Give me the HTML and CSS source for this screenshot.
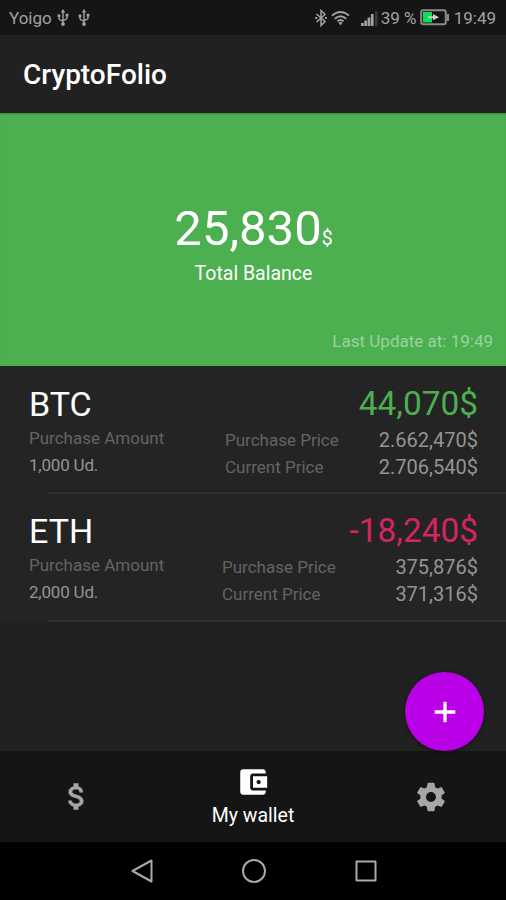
FILE: index.html
```html
<!DOCTYPE html>
<html lang="en">
<head>
<meta charset="utf-8">
<title>CryptoFolio</title>
<link rel="stylesheet" href="styles.css">
</head>
<body>
<div class="status">
  <span class="carrier">Yoigo</span>
  <svg class="usb" viewBox="0 0 12 18"><g id="usb"><path d="M6 2V14M2 7v2.500q0 1.500 4 2.500M10 6v3q0 1.500-4 2.500" fill="none" stroke="currentColor" stroke-width="1.400"/><path d="M6 0l2.200 3.500H3.800zM.6 5.500h2.800v2.600H.6zM8.600 4.800h2.800v2.600H8.600z" fill="currentColor"/><circle cx="6" cy="15" r="1.900" fill="currentColor"/></g></svg>
  <svg class="usb" viewBox="0 0 12 18"><use href="#usb"/></svg>
  <span class="spacer"></span>
  <svg class="bt" viewBox="0 0 12 18"><path d="M1.500 5l8.500 7.500L6 16.500v-15l4 4L1.500 13" fill="none" stroke="currentColor" stroke-width="1.500"/><path d="M.2 8h2v2h-2zM9.800 8h2v2h-2z" fill="currentColor"/></svg>
  <svg class="wifi" viewBox="0 0 20 16"><path d="M1 5.500Q10-2 19 5.500M4 8.700Q10 3.500 16 8.700M6.800 11.500Q10 8.800 13.200 11.500" fill="none" stroke="currentColor" stroke-width="2"/><path d="M7.800 13q2.200-1.500 4.400 0L10 15.700z" fill="currentColor"/></svg>
  <svg class="signal" viewBox="0 0 18 16"><path d="M0 13h2.700v3H0zM3.300 10.500h2.700V16H3.300zM6.600 7.500h2.700V16H6.600zM9.900 4h2.700V16H9.900z" fill="currentColor"/><path d="M14 1h2.500v15H14z" fill="#3a3a3a"/></svg>
  <span class="percent">39 %</span>
  <svg class="battery" viewBox="0 0 30 17"><rect x="1.200" y="1.200" width="24.600" height="14" rx="2" fill="none" stroke="#8b8b8b" stroke-width="2"/><path d="M27 5h2v7h-2z" fill="#8b8b8b"/><path d="M3 3h9v10.500H3z" fill="#0ddb59"/><path d="M8 7.300h5V5l6 3.300-6 3v-2H8z" fill="#c3cfc7"/></svg>
  <span class="time">19:49</span>
</div>
<header class="appbar">CryptoFolio</header>
<section class="balance">
  <div class="total">25,830<span class="currency">$</span></div>
  <div class="caption">Total Balance</div>
  <div class="updated">Last Update at: 19:49</div>
</section>
<main class="holdings">
  <article class="coin">
    <div class="line"><h2>BTC</h2><span class="profit gain">44,070$</span></div>
    <div class="details">
      <div class="amount"><span class="label">Purchase Amount</span><span class="units">1,000 Ud.</span></div>
      <dl class="prices"><dt>Purchase Price</dt><dd>2.662,470$</dd><dt>Current Price</dt><dd>2.706,540$</dd></dl>
    </div>
  </article>
  <article class="coin">
    <div class="line"><h2>ETH</h2><span class="profit loss">-18,240$</span></div>
    <div class="details">
      <div class="amount"><span class="label">Purchase Amount</span><span class="units">2,000 Ud.</span></div>
      <dl class="prices wide"><dt>Purchase Price</dt><dd>375,876$</dd><dt>Current Price</dt><dd>371,316$</dd></dl>
    </div>
  </article>
  <button class="fab" aria-label="Add"><svg viewBox="0 0 24 24"><path d="M12 1.700v20.600M1.700 12h20.600" stroke="#fff" stroke-width="3.300"/></svg></button>
</main>
<nav class="tabs">
  <div class="tab"><svg class="dollar" viewBox="6 3 11 18"><path d="M11.800 10.900c-2.270-.59-3-1.200-3-2.150 0-1.090 1.010-1.850 2.700-1.850 1.780 0 2.440.85 2.500 2.100h2.210c-.07-1.720-1.120-3.300-3.210-3.810V3h-3v2.160c-1.940.42-3.500 1.680-3.500 3.610 0 2.310 1.910 3.460 4.700 4.130 2.500.6 3 1.480 3 2.410 0 .69-.49 1.790-2.700 1.790-2.060 0-2.870-.92-2.980-2.100h-2.200c.12 2.190 1.760 3.420 3.680 3.830V21h3v-2.150c1.950-.37 3.500-1.500 3.500-3.550 0-2.840-2.430-3.810-4.700-4.400z" fill="currentColor" stroke="currentColor" stroke-width=".4"/></svg></div>
  <div class="tab active"><svg class="wallet" viewBox="0 0 24 24"><path d="M21 18v1c0 1.100-.9 2-2 2H5c-1.110 0-2-.9-2-2V5c0-1.100.89-2 2-2h14c1.100 0 2 .9 2 2v1h-9c-1.110 0-2 .9-2 2v8c0 1.100.89 2 2 2h9zm-9-2h10V8H12v8zm4-2.500c-.83 0-1.500-.67-1.500-1.500s.67-1.500 1.500-1.500 1.500.67 1.500 1.500-.67 1.500-1.500 1.500z" fill="currentColor"/></svg><span>My wallet</span></div>
  <div class="tab"><svg class="gear" viewBox="0 0 24 24"><path d="M19.430 12.980c.04-.32.07-.64.07-.98s-.03-.66-.07-.98l2.110-1.650c.19-.15.24-.42.12-.64l-2-3.460c-.12-.22-.39-.3-.61-.22l-2.490 1c-.52-.4-1.080-.73-1.690-.98l-.38-2.650C14.460 2.180 14.250 2 14 2h-4c-.25 0-.46.18-.49.42l-.38 2.650c-.61.25-1.170.59-1.690.98l-2.490-1c-.23-.09-.49 0-.61.22l-2 3.460c-.13.22-.07.49.12.64l2.110 1.650c-.04.32-.07.65-.07.98s.03.66.07.98l-2.110 1.650c-.19.15-.24.42-.12.64l2 3.460c.12.22.39.3.61.22l2.490-1c.52.4 1.080.73 1.690.98l.38 2.650c.03.24.24.42.49.42h4c.25 0 .46-.18.49-.42l.38-2.650c.61-.25 1.170-.59 1.690-.98l2.490 1c.23.09.49 0 .61-.22l2-3.460c.12-.22.07-.49-.12-.64l-2.110-1.650zM12 15.500c-1.930 0-3.500-1.570-3.500-3.500s1.570-3.500 3.500-3.500 3.500 1.570 3.500 3.500-1.570 3.500-3.500 3.500z" fill="currentColor"/></svg></div>
</nav>
<div class="system">
  <svg viewBox="0 0 24 26"><path d="M21.500 2.500v21L2.500 13z"/></svg>
  <svg viewBox="0 0 24 26"><circle cx="12" cy="13" r="11"/></svg>
  <svg viewBox="0 0 24 26"><rect x="2.500" y="3.500" width="19" height="19"/></svg>
</div>
</body>
</html>
```

FILE: styles.css
```css
* { box-sizing: border-box; }
body {
  margin: 0;
  width: 506px;
  height: 900px;
  display: flex;
  flex-direction: column;
  overflow: hidden;
  background: #212121;
  color: #fff;
  font-family: Roboto, sans-serif;
}
svg { display: block; flex: none; }
h2, dl, dd { margin: 0; }

.status {
  height: 35px;
  padding: 0 10px 0 9px;
  display: flex;
  align-items: center;
  background: #151515;
  color: #a2a2a2;
  font-size: 17px;
  line-height: 36px;
}
.usb { width: 12px; height: 18px; margin-left: 5px; }
.usb + .usb { margin-left: 9px; }
.spacer { flex: 1; }
.bt { width: 12px; height: 18px; }
.wifi { width: 19px; height: 16px; margin-left: 4px; }
.signal { width: 18px; height: 16px; margin-left: 11px; }
.percent { margin-left: 2px; width: 35px; white-space: nowrap; }
.battery { width: 30px; height: 17px; margin-left: 4px; }
.time { margin-left: 4px; }

.appbar {
  height: 78px;
  padding-left: 23px;
  font-size: 28px;
  font-weight: 500;
  line-height: 80px;
}

.balance {
  height: 253px;
  padding: 88px 13px 0 14px;
  background: #4caf50;
  box-shadow: inset 0 2px 2px -1px #388a3c;
  text-align: center;
}
.total { height: 56px; font-size: 49px; line-height: 56px; }
.currency { font-size: 19.500px; }
.caption { height: 30px; font-size: 19.500px; line-height: 34px; }
.updated { margin-top: 42px; font-size: 17px; line-height: 24px; text-align: right; color: #9bd29d; }

.holdings { position: relative; height: 385px; }
.coin {
  height: 128px;
  padding: 18px 28px 0 29px;
  background: linear-gradient(#2e2e2e, #2e2e2e) 48px 100% / 100% 2px no-repeat #242424;
}
.coin + .coin { padding-top: 17px; }
.line { height: 41px; display: flex; justify-content: space-between; }
.line h2, .profit { font-weight: 400; line-height: 40px; }
.line h2 { font-size: 34px; }
.profit { font-size: 33.400px; }
.gain { color: #4caf50; }
.loss { color: #d42560; }
.details { display: flex; justify-content: space-between; }
.amount { display: flex; flex-direction: column; font-size: 17px; line-height: 27px; }
.label, .prices dt { color: #626466; }
.units { color: #949494; letter-spacing: -.2px; }
.prices { width: 253px; padding-top: 2px; display: grid; grid-template-columns: auto auto; justify-content: space-between; line-height: 27px; }
.prices.wide { width: 256px; }
.prices dt { font-size: 17px; }
.prices dd { font-size: 20px; color: #949494; text-align: right; }

.fab {
  position: absolute;
  right: 22px;
  bottom: 0;
  width: 79px;
  height: 79px;
  padding: 0;
  border: 0;
  border-radius: 50%;
  display: grid;
  place-items: center;
  background: #b900e6;
  box-shadow: 0 1px 4px rgba(0, 0, 0, .45);
}
.fab svg { width: 24px; height: 24px; }

.tabs { height: 91px; display: grid; grid-template-columns: 151px 1fr 151px; background: #151515; }
.tab { display: flex; flex-direction: column; align-items: center; justify-content: center; color: #a6a6a6; }
.active { justify-content: flex-start; padding-top: 14px; color: #fff; font-size: 19.500px; line-height: 24px; }
.dollar { width: 16px; height: 27px; }
.wallet { width: 34px; height: 34px; margin-bottom: 5px; }
.gear { width: 34px; height: 34px; }

.system { height: 58px; display: flex; justify-content: center; align-items: center; gap: 88px; padding-left: 1px; background: #000; }
.system svg { width: 24px; height: 26px; fill: none; stroke: #a9a9a9; stroke-width: 2; stroke-linejoin: round; }
```
